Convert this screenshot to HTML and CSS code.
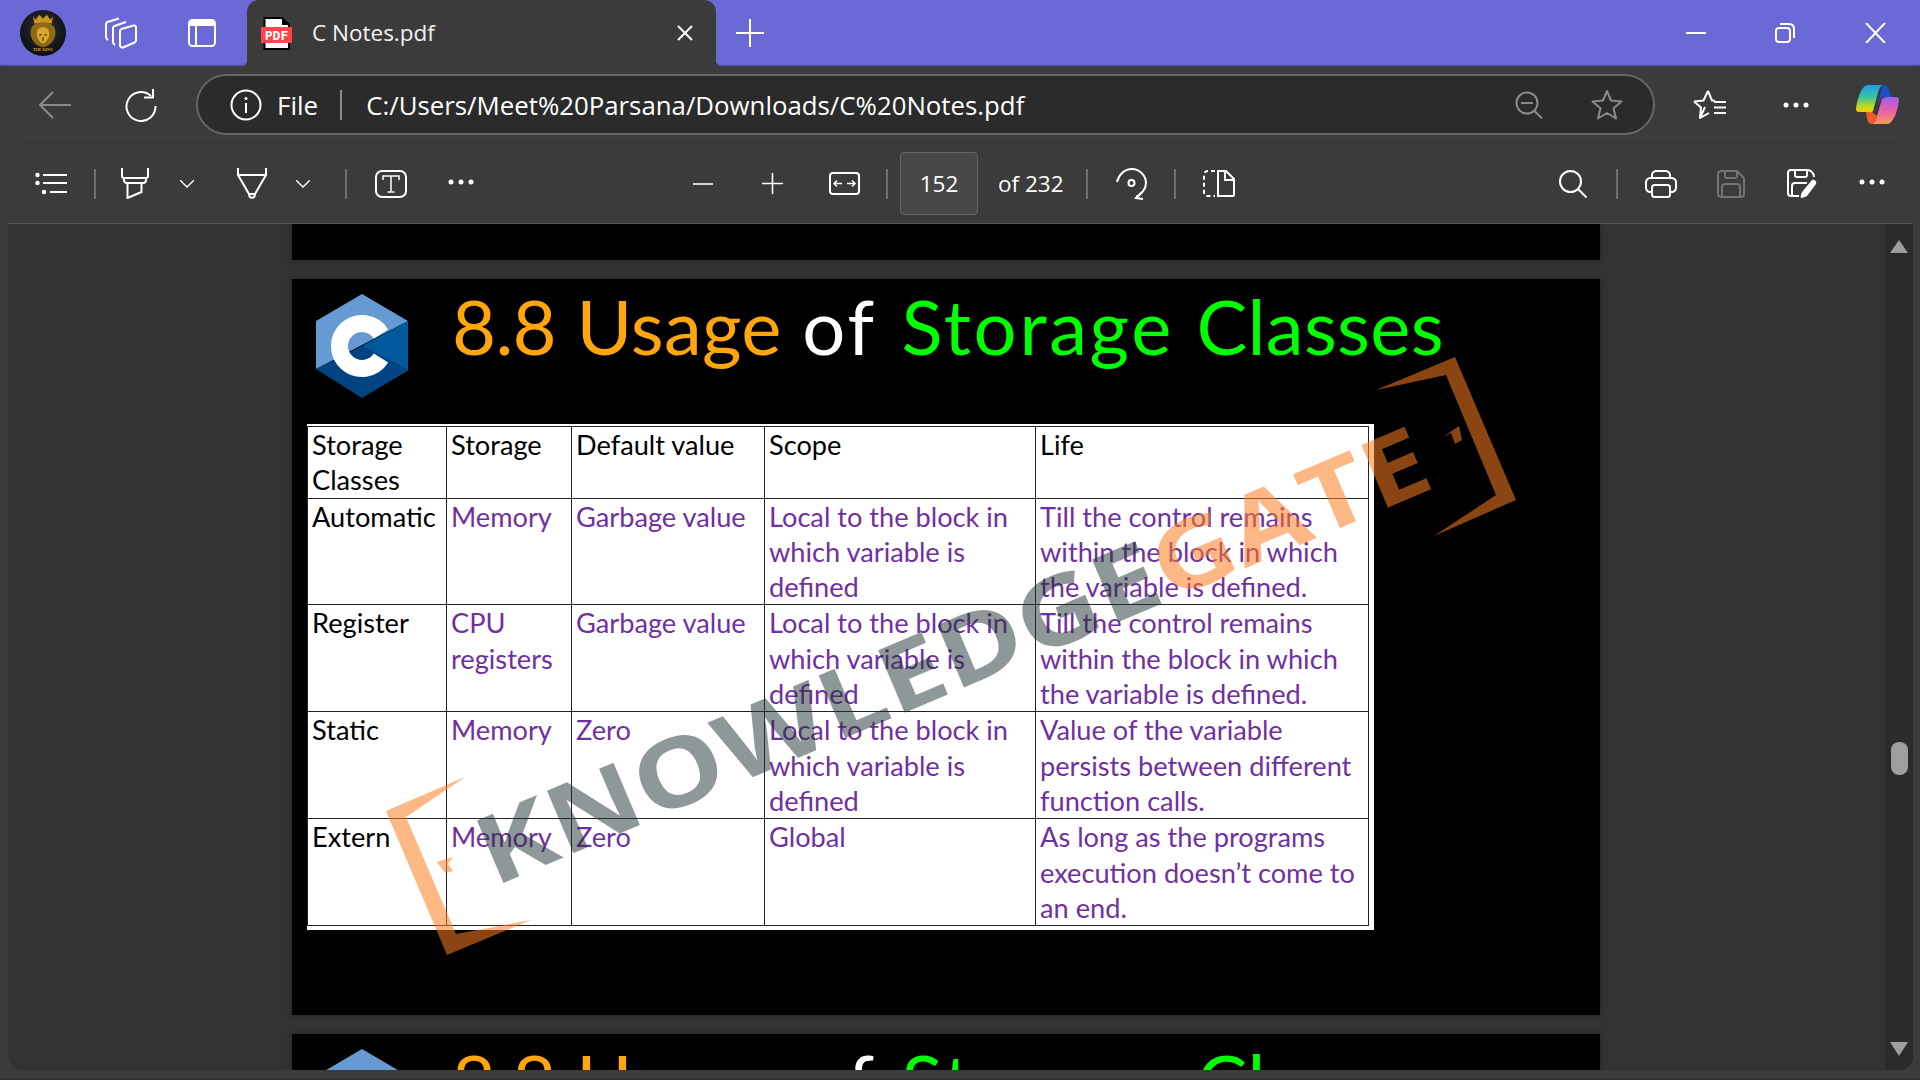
FILE: index.html
```html
<!DOCTYPE html>
<html lang="en">
<head>
  <meta charset="UTF-8">
  <title>C Notes.pdf</title>
  <link rel="stylesheet" href="styles.css">
</head>
<body>
  <!-- Tab strip -->
  <header class="strip">
    <svg class="avatar" viewBox="0 0 46 46">
      <defs>
        <radialGradient id="av" cx="50%" cy="40%" r="60%"><stop offset="0" stop-color="#2c3038"/><stop offset="1" stop-color="#0c0e12"/></radialGradient>
      </defs>
      <circle cx="23" cy="23" r="23" fill="url(#av)"/>
      <g transform="translate(23 21) scale(1.25) translate(-23 -21)">
        <path d="M15 9l2 3 3-4 3 3 3-3 3 4 2-3-1 6H16z" fill="#c8981e"/>
        <path d="M23 14c6 0 10 3 10 8 0 6-4 11-10 12-6-1-10-6-10-12 0-5 4-8 10-8z" fill="#8f6a16"/>
        <path d="M23 18c3 0 5 2 5 5s-2 7-5 8c-3-1-5-5-5-8s2-5 5-5z" fill="#d8a830"/>
        <path d="M20 24h2M24 24h2M23 26v3" stroke="#4a3208" stroke-width="1"/>
      </g>
      <text x="23" y="41" class="av-text">THE KING</text>
    </svg>
    <svg class="ic s-work" width="34" height="32" viewBox="0 0 34 32"><g fill="none" stroke="#fff" stroke-width="2" stroke-linejoin="round"><path d="M2 20V7c0-1 .5-1.600 1.500-2L15 1.500M2 20c0 1.500.6 2.300 2 3"/><path d="M9 25V11c0-1 .5-1.600 1.500-2L22 5M9 25c0 1.500.6 2.300 2 3"/><path d="M16 14c0-1 .5-1.600 1.500-2l12-3.500c1.500-.4 2.500.5 2.500 2v13c0 1-.5 1.600-1.500 2L19 30.500c-1.500.4-3-.5-3-2z"/></g></svg>
    <svg class="ic s-tabs" width="28" height="28" viewBox="0 0 28 28"><rect x="1" y="1" width="26" height="26" rx="3.500" fill="none" stroke="#fff" stroke-width="2"/><path d="M1 7V4.500A3.500 3.500 0 0 1 4.500 1h19A3.500 3.500 0 0 1 27 4.500V7z" fill="#fff"/><path d="M8 6v21" stroke="#fff" stroke-width="2"/></svg>
    <div class="tab">
      <svg class="pdf" width="31" height="33" viewBox="0 0 31 33">
        <path d="M3.500 1H21l7 7v24H3.500z" fill="#fff" stroke="#000" stroke-width="2"/>
        <path d="M21 1v7h7z" fill="#000"/>
        <rect x="0" y="10" width="31" height="16" fill="#f9464c"/>
        <text x="15.500" y="23" class="pdf-text">PDF</text>
      </svg>
      <span class="tab-title">C Notes.pdf</span>
      <svg class="tab-x" width="18" height="16" viewBox="0 0 18 16"><path d="M2 1l14 14M16 1L2 15" stroke="#fff" stroke-width="2"/></svg>
    </div>
    <svg class="ic s-new" width="28" height="28" viewBox="0 0 28 28"><path d="M14 0v28M0 14h28" stroke="#fff" stroke-width="2"/></svg>
    <svg class="ic s-min" width="20" height="4" viewBox="0 0 20 4"><path d="M0 2h20" stroke="#fff" stroke-width="2"/></svg>
    <svg class="ic s-max" width="20" height="20" viewBox="0 0 20 20"><rect x="1" y="5" width="14" height="14" rx="3" fill="none" stroke="#fff" stroke-width="2"/><path d="M5 1h9c3 0 5 2 5 5v9" fill="none" stroke="#fff" stroke-width="2"/></svg>
    <svg class="ic s-close" width="21" height="20" viewBox="0 0 21 20"><path d="M1 0l19 20M20 0L1 20" stroke="#fff" stroke-width="2"/></svg>
  </header>

  <!-- Address row -->
  <nav class="navbar">
    <svg class="ic n-back" width="32" height="28" viewBox="0 0 32 28"><path d="M32 14H2M14 1L1 14l13 13" fill="none" stroke="#8b8b8b" stroke-width="2"/></svg>
    <svg class="ic n-reload" width="32" height="34" viewBox="0 0 32 34"><path d="M26 8A14.500 14.500 0 1 0 30.500 18" fill="none" stroke="#fff" stroke-width="2"/><path d="M19 9.500h9V1" fill="none" stroke="#fff" stroke-width="2"/></svg>
    <div class="omnibox">
      <svg class="ic o-info" width="32" height="32" viewBox="0 0 32 32"><circle cx="16" cy="16" r="14.500" fill="none" stroke="#fff" stroke-width="2"/><path d="M16 14v10" stroke="#fff" stroke-width="2"/><circle cx="16" cy="9.500" r="1.500" fill="#fff"/></svg>
      <span class="o-file">File</span>
      <span class="o-sep"></span>
      <span class="o-url">C:/Users/Meet%20Parsana/Downloads/C%20Notes.pdf</span>
      <svg class="ic o-zoom" width="28" height="28" viewBox="0 0 28 28"><circle cx="12" cy="12" r="10.500" fill="none" stroke="#8b8b8b" stroke-width="2"/><path d="M6 12h12M19.500 20L27 27.500" stroke="#8b8b8b" stroke-width="2"/></svg>
      <svg class="ic o-star" width="32" height="31" viewBox="0 0 32 31"><path d="M16 2l4 9.500 10.500.9-8 6.800 2.500 10.300-9-5.500-9 5.500 2.500-10.300-8-6.800 10.500-.9z" fill="none" stroke="#8b8b8b" stroke-width="2" stroke-linejoin="round"/></svg>
    </div>
    <svg class="ic n-fav" width="33" height="31" viewBox="0 0 33 31"><path d="M15 2l4 9.500 3 .3M12 18l-5 11 9-5M1 12.500l9.500-1L15 2M1 12.500l7 6-1 10" fill="none" stroke="#fff" stroke-width="2" stroke-linejoin="round"/><path d="M21 13h12M21 18.500h12M21 24h12" stroke="#fff" stroke-width="2"/></svg>
    <svg class="ic n-dots" width="26" height="6" viewBox="0 0 26 6"><circle cx="3" cy="3" r="2.500" fill="#fff"/><circle cx="13" cy="3" r="2.500" fill="#fff"/><circle cx="23" cy="3" r="2.500" fill="#fff"/></svg>
    <svg class="ic n-copilot" width="43" height="39" viewBox="0 0 43 39">
      <defs>
        <linearGradient id="cpl" x1="0" y1="0" x2="0" y2="1"><stop offset="0" stop-color="#1c9cf0"/><stop offset=".45" stop-color="#3cc49c"/><stop offset=".8" stop-color="#c8d820"/><stop offset="1" stop-color="#f4d000"/></linearGradient>
        <linearGradient id="cpr" x1="0" y1="0" x2="0" y2="1"><stop offset="0" stop-color="#a35eea"/><stop offset=".5" stop-color="#e85fb0"/><stop offset="1" stop-color="#fb9a58"/></linearGradient>
      </defs>
      <path d="M27 0c4 0 6 3 7 8l1 4h-7c-2 0-3 1-4 3l-3 6z" fill="#1a50d0"/>
      <path d="M10 27h6l5 4c-1 4-2 7-5 8-4 0-5-3-6-12z" fill="#ee5a28"/>
      <path d="M12 0h15c-3 1-4 4-5 8l-5 18c-1 2-3 1-4 1H3c-2 0-3-1-3-3C1 15 4 6 8 2c1-1 2-2 4-2z" fill="url(#cpl)"/>
      <path d="M31 12h9c2 0 3 1 3 3-1 9-4 18-8 22-1 1-2 2-4 2H16c3-1 4-4 5-8l5-17c1-1 3-2 5-2z" fill="url(#cpr)"/>
    </svg>
  </nav>

  <!-- PDF toolbar -->
  <div class="pdfbar">
    <svg class="ic b-list" width="32" height="23" viewBox="0 0 32 23"><g fill="#fff"><circle cx="2.500" cy="3" r="2.200"/><circle cx="2.500" cy="11" r="2.200"/><circle cx="9" cy="20" r="2.200"/></g><path d="M8 3h24M8 11h24M15 20h17" stroke="#fff" stroke-width="2"/></svg>
    <span class="sep b-s1"></span>
    <svg class="ic b-hl" width="28" height="31" viewBox="0 0 28 31"><path d="M1 0v8c0 1 1 2 2 2h22c1 0 2-1 2-2V0M3 10v2c0 2 1 3 3 3h16c2 0 3-1 3-3v-2M6.500 15v15l14-6v-9" fill="none" stroke="#fff" stroke-width="2"/></svg>
    <svg class="ic b-ch1" width="14" height="8" viewBox="0 0 14 8"><path d="M0 0l7 7 7-7" fill="none" stroke="#fff" stroke-width="1.300"/></svg>
    <svg class="ic b-pen" width="30" height="31" viewBox="0 0 30 31"><path d="M1 0v7h28V0M1 7l11 19h6L29 7M12 26c0 5 6 5 6 0" fill="none" stroke="#fff" stroke-width="2"/></svg>
    <svg class="ic b-ch2" width="14" height="8" viewBox="0 0 14 8"><path d="M0 0l7 7 7-7" fill="none" stroke="#fff" stroke-width="1.300"/></svg>
    <span class="sep b-s2"></span>
    <svg class="ic b-text" width="32" height="28" viewBox="0 0 32 28"><rect x="1" y="1" width="30" height="26" rx="6" fill="none" stroke="#fff" stroke-width="2"/><path d="M8 10V6h16v4M16 6v16M12.500 22h7" fill="none" stroke="#fff" stroke-width="1.500"/></svg>
    <svg class="ic b-more" width="26" height="6" viewBox="0 0 26 6"><circle cx="3" cy="3" r="2.500" fill="#fff"/><circle cx="13" cy="3" r="2.500" fill="#fff"/><circle cx="23" cy="3" r="2.500" fill="#fff"/></svg>
    <svg class="ic b-minus" width="20" height="4" viewBox="0 0 20 4"><path d="M0 2h20" stroke="#fff" stroke-width="1.600"/></svg>
    <svg class="ic b-plus" width="21" height="21" viewBox="0 0 21 21"><path d="M10.500 0v21M0 10.500h21" stroke="#fff" stroke-width="1.600"/></svg>
    <svg class="ic b-fit" width="31" height="23" viewBox="0 0 31 23"><rect x="1" y="1" width="29" height="21" rx="3" fill="none" stroke="#fff" stroke-width="2"/><path d="M5 11.500h8M8 8.500l-3 3 3 3M18 11.500h8M23 8.500l3 3-3 3" fill="none" stroke="#fff" stroke-width="1.500"/></svg>
    <span class="sep b-s3"></span>
    <div class="pagebox">152</div>
    <span class="pagecount">of 232</span>
    <span class="sep b-s4"></span>
    <svg class="ic b-rot" width="31" height="32" viewBox="0 0 31 32"><path d="M1 14C3 6 9 1 16 1c8 0 14 7 14 14 0 6-5 12-10 14" fill="none" stroke="#fff" stroke-width="2"/><path d="M26 24l-6 6 7 1" fill="none" stroke="#fff" stroke-width="2"/><circle cx="15.500" cy="15" r="3" fill="none" stroke="#fff" stroke-width="2"/></svg>
    <span class="sep b-s5"></span>
    <svg class="ic b-split" width="32" height="27" viewBox="0 0 32 27"><path d="M12 1H5C2.500 1 1 2.500 1 5v17c0 2.500 1.500 4 4 4h7" fill="none" stroke="#fff" stroke-width="2" stroke-dasharray="4 3"/><path d="M15 1h8l8 8v16c0 1 0 1-1 1H15z" fill="none" stroke="#fff" stroke-width="2"/><path d="M22 1v9h9" fill="none" stroke="#fff" stroke-width="2"/></svg>
    <svg class="ic b-find" width="28" height="28" viewBox="0 0 28 28"><circle cx="11.500" cy="11.500" r="10.500" fill="none" stroke="#fff" stroke-width="2"/><path d="M19 19l8.500 8.500" stroke="#fff" stroke-width="2"/></svg>
    <span class="sep b-s6"></span>
    <svg class="ic b-print" width="32" height="28" viewBox="0 0 32 28"><path d="M7 8V5c0-2 2-4 4-4h10c2 0 4 2 4 4v3M7 22H5c-2 0-4-2-4-4v-6c0-2 2-4 4-4h22c2 0 4 2 4 4v6c0 2-2 4-4 4h-2" fill="none" stroke="#fff" stroke-width="2"/><rect x="7" y="15" width="18" height="12" rx="2.500" fill="none" stroke="#fff" stroke-width="2"/></svg>
    <svg class="ic b-save" width="28" height="28" viewBox="0 0 28 28"><path d="M4 1h16l7 7v16c0 2-1 3-3 3H4c-2 0-3-1-3-3V4c0-2 1-3 3-3zM8 1v5c0 1 1 2 2 2h8c1 0 2-1 2-2V1M5 27V17c0-2 1-3 3-3h12c2 0 3 1 3 3v10" fill="none" stroke="#737373" stroke-width="2"/></svg>
    <svg class="ic b-saveas" width="30" height="29" viewBox="0 0 30 29"><path d="M12 27H4c-2 0-3-1-3-3V4c0-2 1-3 3-3h16c4 0 7 3 7 7M8 1v5c0 1 1 2 2 2h8c1 0 2-1 2-2V1M5 27V17c0-2 1-3 3-3h12" fill="none" stroke="#fff" stroke-width="2"/><path d="M25 11c2-1 5 1 4 4L20 27c-2 1-5 2-6 2-1-1 0-4 1-6z" fill="#fff"/></svg>
    <svg class="ic b-more2" width="26" height="6" viewBox="0 0 26 6"><circle cx="3" cy="3" r="2.500" fill="#fff"/><circle cx="13" cy="3" r="2.500" fill="#fff"/><circle cx="23" cy="3" r="2.500" fill="#fff"/></svg>
  </div>

  <!-- Document area -->
  <main class="viewer">
    <div class="pages">
      <div class="page page-cut"></div>

      <section class="page page-full">
        <div class="slide-head">
          <svg class="c-logo" width="94" height="104" viewBox="316 294 94 104">
            <path d="M362 294l46 27-92 48v-48z" fill="#659ad2"/>
            <path d="M408 321v49l-46-24z" fill="#00599c"/>
            <path d="M316 369l46-23 47 24-47 28z" fill="#004482"/>
            <path d="M381 334A22.500 22.500 0 1 0 381 358" fill="none" stroke="#fff" stroke-width="17"/>
          </svg>
          <h1 class="slide-title"><span class="t-orange w-num">8.8</span> <span class="t-orange w-usage">Usage</span> <span class="t-white w-of">of</span> <span class="t-green w-storage">Storage</span> <span class="t-green w-classes">Classes</span></h1>
        </div>
        <div class="table-wrap">
          <table class="notes">
            <colgroup><col class="c1"><col class="c2"><col class="c3"><col class="c4"><col class="c5"></colgroup>
            <tr class="head">
              <td>Storage Classes</td><td>Storage</td><td>Default value</td><td>Scope</td><td>Life</td>
            </tr>
            <tr>
              <th>Automatic</th><td>Memory</td><td>Garbage value</td>
              <td>Local to the block in which variable is defined</td>
              <td>Till the control remains within the block in which the variable is defined.</td>
            </tr>
            <tr>
              <th>Register</th><td>CPU registers</td><td>Garbage value</td>
              <td>Local to the block in which variable is defined</td>
              <td>Till the control remains within the block in which the variable is defined.</td>
            </tr>
            <tr>
              <th>Static</th><td>Memory</td><td>Zero</td>
              <td>Local to the block in which variable is defined</td>
              <td>Value of the variable persists between different function calls.</td>
            </tr>
            <tr>
              <th>Extern</th><td>Memory</td><td>Zero</td>
              <td>Global</td>
              <td>As long as the programs execution doesn’t come to an end.</td>
            </tr>
          </table>
        </div>
        <!-- Watermark, coordinates are screen pixels -->
        <svg class="watermark" width="1308" height="736" viewBox="292 279 1308 736">
          <path class="wm-o" d="M465 777L386 811 447 955 531 920 456 934 406 817z"/>
          <path class="wm-o" d="M437 862L453 857 448 864 453 871 445 873z"/>
          <path class="wm-o" d="M1376 390L1455 357 1516 500 1434 536 1496 495 1446 375z"/>
          <path class="wm-o" d="M1443 437L1459 426 1462 440 1455 444 1451 433z"/>
          <text class="wm-text" transform="translate(494 887) rotate(-23) scale(1.2 1)" textLength="854" lengthAdjust="spacing"><tspan class="wm-g">KNOWLEDGE</tspan><tspan class="wm-o">GATE</tspan></text>
        </svg>
      </section>

      <section class="page page-cut">
        <div class="slide-head">
          <svg class="c-logo" width="94" height="104" viewBox="316 294 94 104">
            <path d="M362 294l46 27-92 48v-48z" fill="#659ad2"/>
            <path d="M408 321v49l-46-24z" fill="#00599c"/>
          </svg>
          <h1 class="slide-title"><span class="t-orange w-num">8.8</span> <span class="t-orange w-usage">Usage</span> <span class="t-white w-of">of</span> <span class="t-green w-storage">Storage</span> <span class="t-green w-classes">Classes</span></h1>
        </div>
      </section>
    </div>
    <div class="scrollbar">
      <span class="arrow-up"></span>
      <span class="thumb"></span>
      <span class="arrow-down"></span>
    </div>
  </main>
</body>
</html>
```

FILE: styles.css
```css
* {
  box-sizing: border-box;
}

html, body {
  height: 100%;
}

body {
  margin: 0;
  width: 1920px;
  height: 1080px;
  overflow: hidden;
  display: flex;
  flex-direction: column;
  background: #3b3b3b;
  border-bottom: 2px solid #2f2f2f;
  font-family: "Open Sans", sans-serif;
  color: #fff;
}

.ic {
  display: block;
  flex: none;
}

/* Tab strip */
.strip {
  height: 66px;
  flex: none;
  display: flex;
  align-items: center;
  background: #6b69d6;
  box-shadow: inset 0 -2px 2px -1px rgba(0,0,0,0.25);
}

.avatar {
  width: 46px;
  height: 46px;
  margin-left: 20px;
  flex: none;
}

.av-text {
  font: bold 4px "Liberation Serif", serif;
  fill: #d9a520;
  text-anchor: middle;
}

.s-work { margin-left: 38px; }
.s-tabs { margin-left: 50px; }
.s-new { margin-left: 20px; }
.s-min { margin-left: 922px; }
.s-max { margin-left: 69px; }
.s-close { margin-left: 70px; }

.tab {
  position: relative;
  width: 469px;
  height: 66px;
  margin-left: 31px;
  display: flex;
  align-items: center;
  background: #3b3b3b;
  border-radius: 12px 12px 0 0;
}

.tab::before,
.tab::after {
  content: "";
  position: absolute;
  bottom: 0;
  width: 6px;
  height: 6px;
}

.tab::before {
  left: -6px;
  background: radial-gradient(circle at 0 0, transparent 6px, #3b3b3b 6.5px);
}

.tab::after {
  right: -6px;
  background: radial-gradient(circle at 100% 0, transparent 6px, #3b3b3b 6.5px);
}

.pdf {
  margin-left: 14px;
  flex: none;
}

.pdf-text {
  font: bold 13px "DejaVu Sans Mono", monospace;
  fill: #fff;
  text-anchor: middle;
}

.tab-title {
  margin-left: 20px;
  margin-top: -2px;
  font-size: 22.5px;
  color: #f2f2f2;
}

.tab-x {
  margin-left: auto;
  margin-right: 22px;
  flex: none;
}

/* Address row */
.navbar {
  height: 77px;
  flex: none;
  display: flex;
  align-items: center;
}

.n-back { margin-left: 39px; }
.n-reload { margin-left: 54px; }
.n-fav { margin-left: 38px; }
.n-dots { margin-left: 57px; }
.n-copilot { margin-left: 47px; }

.omnibox {
  width: 1459px;
  height: 61px;
  margin-left: 39px;
  display: flex;
  align-items: center;
  background: #2b2b2b;
  border: 2px solid #666;
  border-radius: 31px;
}

.o-info { margin-left: 32px; }

.o-file {
  margin-left: 15px;
  font-size: 26px;
}

.o-sep {
  width: 2px;
  height: 30px;
  margin-left: 22px;
  background: #8b8b8b;
}

.o-url {
  margin-left: 24px;
  font-size: 25.8px;
  white-space: nowrap;
}

.o-zoom { margin-left: auto; }
.o-star { margin-left: 48px; margin-right: 30px; }

/* PDF toolbar */
.pdfbar {
  height: 81px;
  flex: none;
  margin: 0 8px;
  display: flex;
  align-items: center;
  border-top: 1px solid #363636;
  border-bottom: 1px solid #555;
  border-radius: 14px 14px 0 0;
  background: #3b3b3b;
}

.sep {
  width: 2px;
  height: 30px;
  flex: none;
  background: #6f6f6f;
}

.b-list { margin-left: 27px; }
.b-s1 { margin-left: 27px; }
.b-hl { margin-left: 25px; }
.b-ch1 { margin-left: 31px; }
.b-pen { margin-left: 43px; }
.b-ch2 { margin-left: 29px; }
.b-s2 { margin-left: 35px; }
.b-text { margin-left: 28px; }
.b-more { margin-left: 41px; margin-top: -4px; }
.b-minus { margin-left: 219px; }
.b-plus { margin-left: 49px; }
.b-fit { margin-left: 46px; }
.b-s3 { margin-left: 26px; }
.b-s4 { margin-left: 23px; }
.b-rot { margin-left: 28px; }
.b-s5 { margin-left: 27px; }
.b-split { margin-left: 27px; }
.b-find { margin-left: 324px; }
.b-s6 { margin-left: 29px; }
.b-print { margin-left: 27px; }
.b-save { margin-left: 40px; }
.b-saveas { margin-left: 42px; }
.b-more2 { margin-left: 42px; margin-top: -4px; }

.pagebox {
  width: 78px;
  height: 63px;
  margin-left: 12px;
  display: flex;
  align-items: center;
  justify-content: center;
  background: #474747;
  border: 1px solid #666;
  border-radius: 4px;
  font-size: 22.5px;
}

.pagecount {
  width: 65px;
  margin-left: 20px;
  font-size: 22.5px;
  white-space: nowrap;
}

/* Document area */
.viewer {
  height: 846px;
  flex: none;
  width: 1905px;
  margin-left: 8px;
  display: flex;
  background: #333;
  border-radius: 0 0 14px 14px;
  overflow: hidden;
}

.pages {
  flex: 1;
  padding-left: 284px;
  display: flex;
  flex-direction: column;
  gap: 19px;
}

.page {
  width: 1308px;
  flex: none;
  background: #000;
  box-shadow: 0 0 6px rgba(0,0,0,0.3);
}

.page-cut {
  height: 36px;
  overflow: hidden;
}

.page-full {
  position: relative;
  height: 736px;
}

.slide-head {
  height: 145px;
  padding: 15px 0 0 24px;
  display: flex;
  align-items: flex-start;
}

.c-logo {
  flex: none;
}

.slide-title {
  margin: -16px 0 0 42px;
  font-family: "Comic Sans MS", "Lato", sans-serif;
  font-size: 76px;
  font-weight: 400;
  line-height: 96px;
  white-space: nowrap;
  word-spacing: 1px;
}

.w-num { letter-spacing: -0.7px; }
.w-usage { letter-spacing: 0.3px; }
.w-of { letter-spacing: 3px; margin-right: 4px; }
.w-storage { letter-spacing: 2.7px; margin-right: 2px; }
.w-classes { letter-spacing: 0.3px; }

.t-orange { color: #ffa50d; }
.t-white { color: #fff; }
.t-green { color: #00ff00; }

.table-wrap {
  width: 1067px;
  margin-left: 15px;
  padding: 2px 5px 4px 0;
  background: #fff;
}

.notes {
  width: 1061px;
  border-collapse: collapse;
  table-layout: fixed;
  font-family: "Lato", sans-serif;
  font-size: 27.2px;
  line-height: 35.3px;
}

.c1 { width: 139px; }
.c2 { width: 125px; }
.c3 { width: 193px; }
.c4 { width: 271px; }
.c5 { width: 333px; }

.notes td,
.notes th {
  padding: 0 4px;
  border: 1px solid #222;
  vertical-align: top;
  text-align: left;
  font-weight: 400;
  color: #7030a0;
}

.notes th,
.notes .head td {
  color: #000;
}

/* Watermark */
.watermark {
  position: absolute;
  left: 0;
  top: 0;
  pointer-events: none;
}

.wm-o { fill: rgba(253,125,35,0.55); }
.wm-g { fill: rgba(31,49,51,0.5); }

.wm-text {
  font-family: "Open Sans", sans-serif;
  font-size: 95px;
  font-weight: 700;
}

/* Scrollbar */
.scrollbar {
  width: 28px;
  flex: none;
  display: flex;
  flex-direction: column;
  align-items: center;
  background: #2b2b2b;
}

.arrow-up,
.arrow-down {
  width: 0;
  height: 0;
  border-left: 9px solid transparent;
  border-right: 9px solid transparent;
}

.arrow-up {
  margin-top: 16px;
  border-bottom: 13px solid #9e9e9e;
}

.thumb {
  width: 17px;
  height: 33px;
  margin-top: 489px;
  background: #9e9e9e;
  border-radius: 8px;
}

.arrow-down {
  margin-top: 267px;
  border-top: 14px solid #9e9e9e;
}
```
